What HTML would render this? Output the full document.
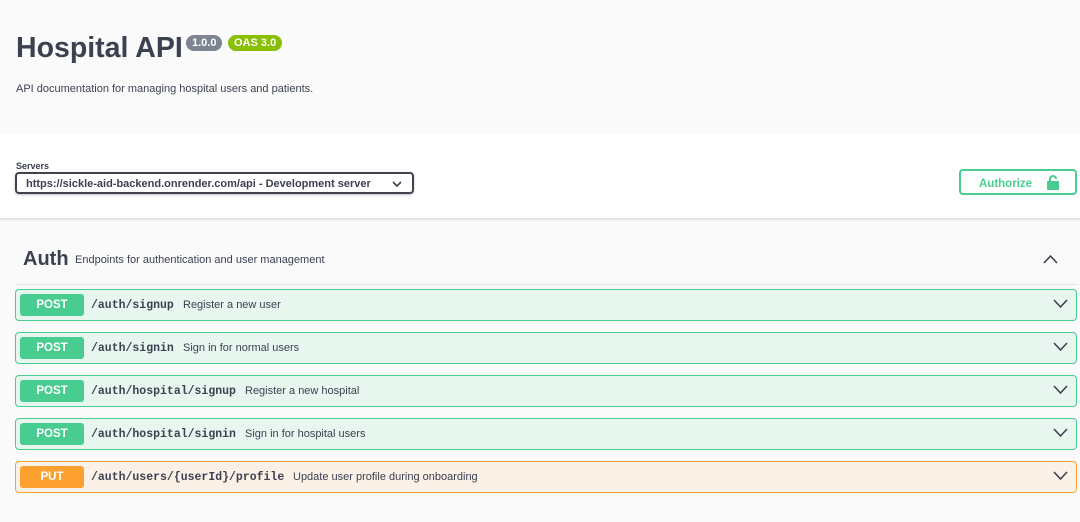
<!DOCTYPE html>
<html><head><style>
*{box-sizing:border-box;margin:0;padding:0}
body{width:1080px;height:522px;overflow:hidden;background:#fafafa;font-family:"Liberation Sans",sans-serif;color:#3b4151;position:relative}
.abs{position:absolute}
h1{position:absolute;left:16px;top:32px;font-size:28.5px;font-weight:bold;color:#3b4151}
.badge{position:absolute;top:35px;height:16px;border-radius:8px;color:#fff;font-size:11px;font-weight:bold;line-height:16px;padding:0 6px}
.desc{left:16px;top:83px;font-size:11px}
.servers{position:absolute;left:0;top:133px;width:1080px;height:86px;background:#fff;border-bottom:1px solid #e0e0e0;box-shadow:0 1px 2px rgba(0,0,0,.1)}
.sel{position:absolute;left:15px;top:39px;width:399px;height:22px;border:2px solid #41444e;border-radius:4px;font-size:11px;font-weight:bold;padding:4px 9px;box-shadow:0 1px 2px rgba(0,0,0,.25)}
.auth{position:absolute;left:959px;top:36px;width:118px;height:26px;border:2px solid #49cc90;border-radius:4px;color:#49cc90;font-size:11.5px;font-weight:bold;padding:7px 0 0 18px}
.op{position:absolute;left:15px;width:1062px;height:32px;border:1px solid #49cc90;background:#e8f6f0;border-radius:4px}
.op.put{border-color:#fca130;background:#fbf1e6}
.m{position:absolute;left:4px;top:4px;width:64px;height:22px;background:#49cc90;border-radius:3px;color:#fff;font-size:11.5px;font-weight:bold;text-align:center;line-height:22px}
.put .m{background:#fca130}
.p{position:absolute;left:75px;top:9px;font-family:"Liberation Mono",monospace;font-weight:bold;font-size:11.5px;color:#3b4151}
.d{position:absolute;top:9px;font-size:11px;color:#3b4151}
.chev{position:absolute;right:8px;top:9px}
</style></head><body>
<h1>Hospital API</h1>
<span class="badge" style="left:186px;background:#7d8492">1.0.0</span>
<span class="badge" style="left:228px;background:#89bf04">OAS 3.0</span>
<div class="abs desc">API documentation for managing hospital users and patients.</div>
<div class="servers">
<div class="abs" style="left:16px;top:28px;font-size:9px;font-weight:bold">Servers</div>
<div class="sel">https://sickle-aid-backend.onrender.com/api - Development server
<svg class="abs" style="right:10px;top:7px" width="10" height="7" viewBox="0 0 10 7"><path d="M1 1l4 4 4-4" stroke="#3b4151" stroke-width="1.6" fill="none"/></svg></div>
<div class="auth">Authorize
<svg class="abs" style="left:86px;top:4px" width="12" height="15" viewBox="0 0 12 15"><path d="M3 7V4a3 3 0 0 1 6 0" stroke="#49cc90" stroke-width="2" fill="none"/><rect x="0" y="6" width="12" height="9" rx="1" fill="#49cc90"/></svg></div>
</div>
<div class="abs" style="left:23px;top:248px;font-size:20px;font-weight:bold">Auth</div>
<div class="abs" style="left:75px;top:254px;font-size:11px">Endpoints for authentication and user management</div>
<svg class="abs" style="left:1043px;top:254px" width="15" height="10" viewBox="0 0 15 10"><path d="M1 9l6.5-7 6.5 7" stroke="#3b4151" stroke-width="1.6" fill="none"/></svg>
<div class="abs" style="left:15px;top:284px;width:1062px;height:1px;background:#e0e2e6"></div>

<div class="op" style="top:289px"><div class="m">POST</div><div class="p">/auth/signup</div><div class="d" style="left:167px">Register a new user</div><svg class="chev" width="15" height="10" viewBox="0 0 15 10"><path d="M1 1l6.5 7 6.5-7" stroke="#3b4151" stroke-width="1.6" fill="none"/></svg></div>
<div class="op" style="top:332px"><div class="m">POST</div><div class="p">/auth/signin</div><div class="d" style="left:167px">Sign in for normal users</div><svg class="chev" width="15" height="10" viewBox="0 0 15 10"><path d="M1 1l6.5 7 6.5-7" stroke="#3b4151" stroke-width="1.6" fill="none"/></svg></div>
<div class="op" style="top:375px"><div class="m">POST</div><div class="p">/auth/hospital/signup</div><div class="d" style="left:229px">Register a new hospital</div><svg class="chev" width="15" height="10" viewBox="0 0 15 10"><path d="M1 1l6.5 7 6.5-7" stroke="#3b4151" stroke-width="1.6" fill="none"/></svg></div>
<div class="op" style="top:418px"><div class="m">POST</div><div class="p">/auth/hospital/signin</div><div class="d" style="left:229px">Sign in for hospital users</div><svg class="chev" width="15" height="10" viewBox="0 0 15 10"><path d="M1 1l6.5 7 6.5-7" stroke="#3b4151" stroke-width="1.6" fill="none"/></svg></div>
<div class="op put" style="top:461px"><div class="m">PUT</div><div class="p">/auth/users/{userId}/profile</div><div class="d" style="left:277px">Update user profile during onboarding</div><svg class="chev" width="15" height="10" viewBox="0 0 15 10"><path d="M1 1l6.5 7 6.5-7" stroke="#3b4151" stroke-width="1.6" fill="none"/></svg></div>
</body></html>
